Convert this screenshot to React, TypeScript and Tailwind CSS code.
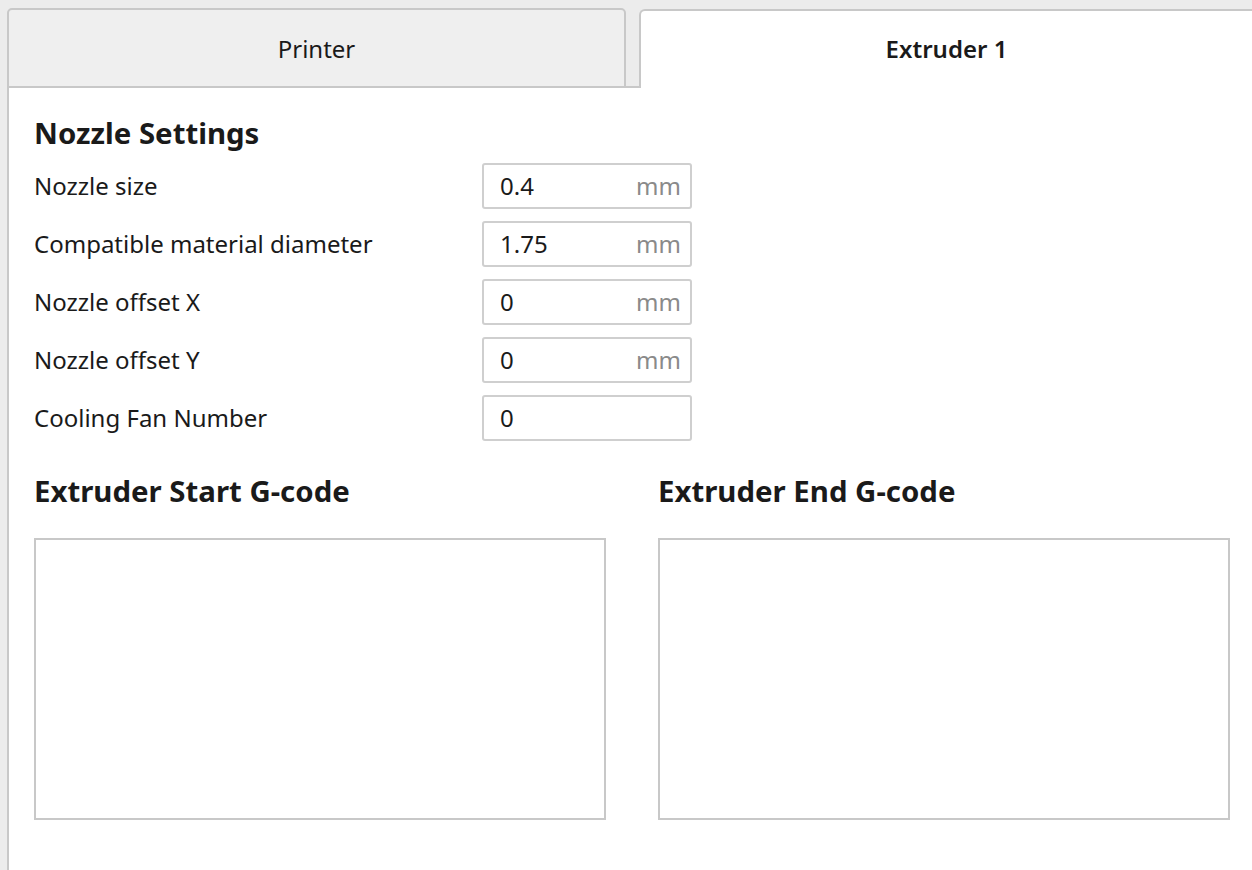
import React from 'react';

interface Setting {
  label: string;
  value: string;
  unit?: string;
}

const settings: Setting[] = [
  { label: 'Nozzle size', value: '0.4', unit: 'mm' },
  { label: 'Compatible material diameter', value: '1.75', unit: 'mm' },
  { label: 'Nozzle offset X', value: '0', unit: 'mm' },
  { label: 'Nozzle offset Y', value: '0', unit: 'mm' },
  { label: 'Cooling Fan Number', value: '0' },
];

export default function App() {
  return (
    <div
      className="flex flex-col h-screen bg-[#ececec] pl-[7px] pt-2 text-[#1a1a1a] overflow-hidden"
      style={{ fontFamily: '"Noto Sans", "Open Sans", sans-serif' }}
    >
      {/* Tabs */}
      <div className="flex items-end h-[80px] shrink-0">
        <div className="w-[619px] h-full bg-[#efefef] border-2 border-[#c8c8c8] rounded-t-[5px] flex items-center justify-center text-[24px] pt-[1px]">
          Printer
        </div>
        <div className="w-[13px] h-full border-b-2 border-[#c8c8c8]" />
        <div className="flex-1 h-[79px] bg-white border-t-2 border-l-2 border-[#c8c8c8] rounded-tl-[6px] flex items-center justify-center text-[24px] font-semibold pb-[2px]">
          Extruder 1
        </div>
      </div>

      {/* Panel */}
      <div className="flex-1 bg-white border-l-2 border-[#c8c8c8] pl-[25px] pr-[22px] pt-[27px]">
        <h2 className="text-[29.4px] font-bold leading-[36px] mb-[12px]">Nozzle Settings</h2>

        <div className="flex flex-col gap-3">
          {settings.map((s) => (
            <div key={s.label} className="flex items-center h-[46px] pb-[1px]">
              <div className="w-[448px] text-[24px]">{s.label}</div>
              <div className="w-[210px] h-[46px] border-2 border-[#cfcfcf] rounded-[3px] flex items-center pl-[16px] pr-[9px] text-[24px]">
                <span className="flex-1">{s.value}</span>
                {s.unit && <span className="text-[#8a8a8a]">{s.unit}</span>}
              </div>
            </div>
          ))}
        </div>

        <div className="grid grid-cols-2 gap-[52px] mt-[30px]">
          {['Extruder Start G-code', 'Extruder End G-code'].map((title) => (
            <div key={title} className="flex flex-col">
              <h3 className="text-[29.4px] font-bold leading-[40px] mb-[27px]">{title}</h3>
              <div className="h-[282px] border-2 border-[#c8c8c8] bg-white" />
            </div>
          ))}
        </div>
      </div>
    </div>
  );
}
